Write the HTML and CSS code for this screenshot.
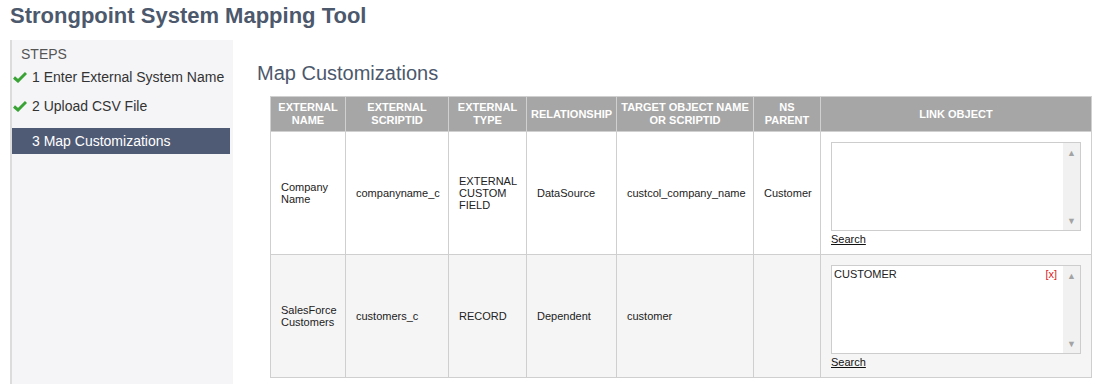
FILE: index.html
```html
<!DOCTYPE html>
<html>
<head>
  <title>Strongpoint System Mapping Tool</title>
<link rel="stylesheet" href="styles.css">
</head>
<body>
  <h1 class="title">Strongpoint System Mapping Tool</h1>
  <div class="layout">
    <div class="steps">
      <div class="steps_head">STEPS</div>
      <div class="step done">
        <svg class="chk" width="14" height="12" viewBox="0 0 14 12"><path d="M1 6.5 L5 10 L13 2" fill="none" stroke="#3aa335" stroke-width="3"/></svg>
        1 Enter External System Name
      </div>
      <div class="step done">
        <svg class="chk" width="14" height="12" viewBox="0 0 14 12"><path d="M1 6.5 L5 10 L13 2" fill="none" stroke="#3aa335" stroke-width="3"/></svg>
        2 Upload CSV File
      </div>
      <div class="step active">3 Map Customizations</div>
    </div>
    <div class="content">
      <h2>Map Customizations</h2>
      <table id="map_tbl">
        <colgroup>
          <col style="width:75px">
          <col style="width:103px">
          <col style="width:78px">
          <col style="width:90px">
          <col style="width:137px">
          <col style="width:67px">
          <col>
        </colgroup>
        <thead>
          <tr>
            <th>EXTERNAL<br>NAME</th>
            <th>EXTERNAL<br>SCRIPTID</th>
            <th>EXTERNAL<br>TYPE</th>
            <th>RELATIONSHIP</th>
            <th>TARGET OBJECT NAME<br>OR SCRIPTID</th>
            <th>NS<br>PARENT</th>
            <th>LINK OBJECT</th>
          </tr>
        </thead>
        <tbody>
          <tr class="tr-ev">
            <td>Company<br>Name</td>
            <td>companyname_c</td>
            <td>EXTERNAL<br>CUSTOM<br>FIELD</td>
            <td>DataSource</td>
            <td>custcol_company_name</td>
            <td>Customer</td>
            <td class="link_cell">
              <div class="link_box">
                <div class="link_items"></div>
                <div class="scroll"><span>&#9650;</span><span>&#9660;</span></div>
              </div>
              <a href="#" class="search">Search</a>
            </td>
          </tr>
          <tr class="tr-odd">
            <td>SalesForce<br>Customers</td>
            <td>customers_c</td>
            <td>RECORD</td>
            <td>Dependent</td>
            <td>customer</td>
            <td></td>
            <td class="link_cell">
              <div class="link_box">
                <div class="link_items">
                  <div class="item"><span>CUSTOMER</span><span class="rm">[x]</span></div>
                </div>
                <div class="scroll"><span>&#9650;</span><span>&#9660;</span></div>
              </div>
              <a href="#" class="search">Search</a>
            </td>
          </tr>
        </tbody>
      </table>
    </div>
  </div>
</body>
</html>
```

FILE: styles.css
```css
body {
  margin: 0;
  font-family: "Liberation Sans", Arial, sans-serif;
  background-color: #fff;
  color: #222;
}
.title {
  margin: 0;
  padding: 3px 10px 0 10px;
  height: 37px;
  font-size: 22px;
  font-weight: bold;
  color: #4c586c;
}
.layout {
  display: flex;
  margin-left: 10px;
}
.steps {
  width: 221px;
  height: 350px;
  border-left: 2px solid #dcdcdc;
  background-color: #f5f5f7;
  font-size: 14px;
  color: #333;
}
.steps_head {
  padding: 6px 0 0 9px;
  height: 16px;
  line-height: 16px;
  color: #555;
}
.step {
  display: flex;
  align-items: center;
  gap: 5px;
  height: 29px;
}
.chk {
  margin-left: 1px;
}
.step.active {
  margin-top: 8px;
  width: 198px;
  height: 26px;
  padding-left: 20px;
  background-color: #4f5b75;
  color: #fff;
}
.content {
  padding-left: 24px;
}
.content h2 {
  margin: 0;
  padding-top: 22px;
  height: 34px;
  font-size: 20px;
  font-weight: normal;
  color: #4c586c;
}
#map_tbl {
  margin-left: 13px;
  width: 822px;
  table-layout: fixed;
  border-collapse: collapse;
  font-size: 11px;
}
#map_tbl th {
  height: 34px;
  padding: 0 2px;
  background-color: #a6a6a6;
  color: #fff;
  font-weight: bold;
  border: 1px solid #d0d0d0;
  line-height: 13px;
}
#map_tbl td {
  height: 122px;
  padding: 0 10px;
  border: 1px solid #cfcfcf;
  line-height: 12px;
  vertical-align: middle;
}
.tr-ev {
  background-color: #fff;
}
.tr-odd {
  background-color: #f5f5f5;
}
#map_tbl td.link_cell {
  height: 112px;
  padding: 10px 10px 0 10px;
  vertical-align: top;
}
.link_box {
  display: flex;
  height: 87px;
  border: 1px solid #cdcdcd;
  background-color: #fff;
}
.link_items {
  flex: 1;
  padding: 2px 2px 0 2px;
}
.item {
  display: flex;
  justify-content: space-between;
  font-size: 11px;
}
.rm {
  color: #d22;
  padding-right: 4px;
}
.scroll {
  width: 17px;
  display: flex;
  flex-direction: column;
  justify-content: space-between;
  align-items: center;
  background-color: #f1f1f1;
  color: #a3a3a3;
  font-size: 9px;
  padding: 4px 0 3px 0;
}
.search {
  display: inline-block;
  margin-top: 2px;
  color: #111;
  font-size: 11px;
}
```
